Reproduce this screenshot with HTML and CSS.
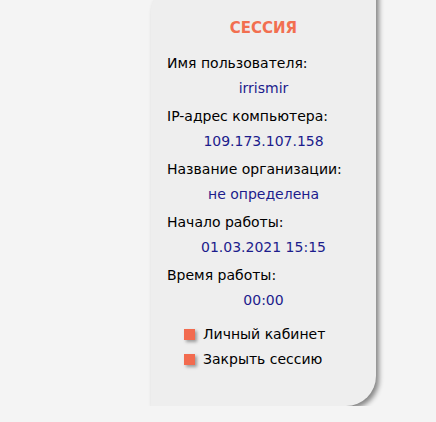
FILE: index.html
```html
<!DOCTYPE html>
<html lang="ru">
<head>
<meta charset="utf-8">
<title>Сессия</title>
<link rel="stylesheet" href="styles.css">
</head>
<body>
<aside class="session">
  <h2 class="session-title">СЕССИЯ</h2>
  <dl class="info">
    <div class="info-item">
      <dt>Имя пользователя:</dt>
      <dd>irrismir</dd>
    </div>
    <div class="info-item">
      <dt>IP-адрес компьютера:</dt>
      <dd>109.173.107.158</dd>
    </div>
    <div class="info-item">
      <dt>Название организации:</dt>
      <dd>не определена</dd>
    </div>
    <div class="info-item">
      <dt>Начало работы:</dt>
      <dd>01.03.2021 15:15</dd>
    </div>
    <div class="info-item">
      <dt>Время работы:</dt>
      <dd>00:00</dd>
    </div>
  </dl>
  <ul class="links">
    <li><a href="#">Личный кабинет</a></li>
    <li><a href="#">Закрыть сессию</a></li>
  </ul>
</aside>
</body>
</html>
```
FILE: styles.css
```css
html, body {
  margin: 0;
  padding: 0;
}
body {
  background: #f4f4f4;
  font-family: "DejaVu Sans", Verdana, sans-serif;
  font-size: 14px;
  color: #000;
}
.session {
  box-sizing: border-box;
  width: 225px;
  height: 416px;
  margin: -10px 0 0 151px;
  padding: 28px 0 0 0;
  background: #eeeeee;
  border-radius: 20px 0 30px 0;
  box-shadow: 3px 3px 5px rgba(0, 0, 0, 0.45);
}
.session-title {
  margin: 0;
  text-align: center;
  font-size: 15px;
  font-weight: bold;
  line-height: 20px;
  color: #f26f50;
}
.info {
  margin: 13px 0 0 0;
  padding: 0;
}
.info-item {
  margin-bottom: 3px;
}
.info dt {
  padding-left: 16px;
  line-height: 25px;
}
.info dd {
  margin: 0;
  text-align: center;
  line-height: 25px;
  color: #1c1c8c;
}
.links {
  list-style: none;
  margin: 9px 0 0 0;
  padding: 0 0 0 33px;
}
.links li {
  display: flex;
  align-items: center;
  gap: 8px;
  line-height: 25px;
}
.links li::before {
  content: "";
  width: 11px;
  height: 11px;
  background: #f26b4f;
  box-shadow: 2px 2px 3px rgba(0, 0, 0, 0.35);
}
.links a {
  color: #000;
  text-decoration: none;
}
```
